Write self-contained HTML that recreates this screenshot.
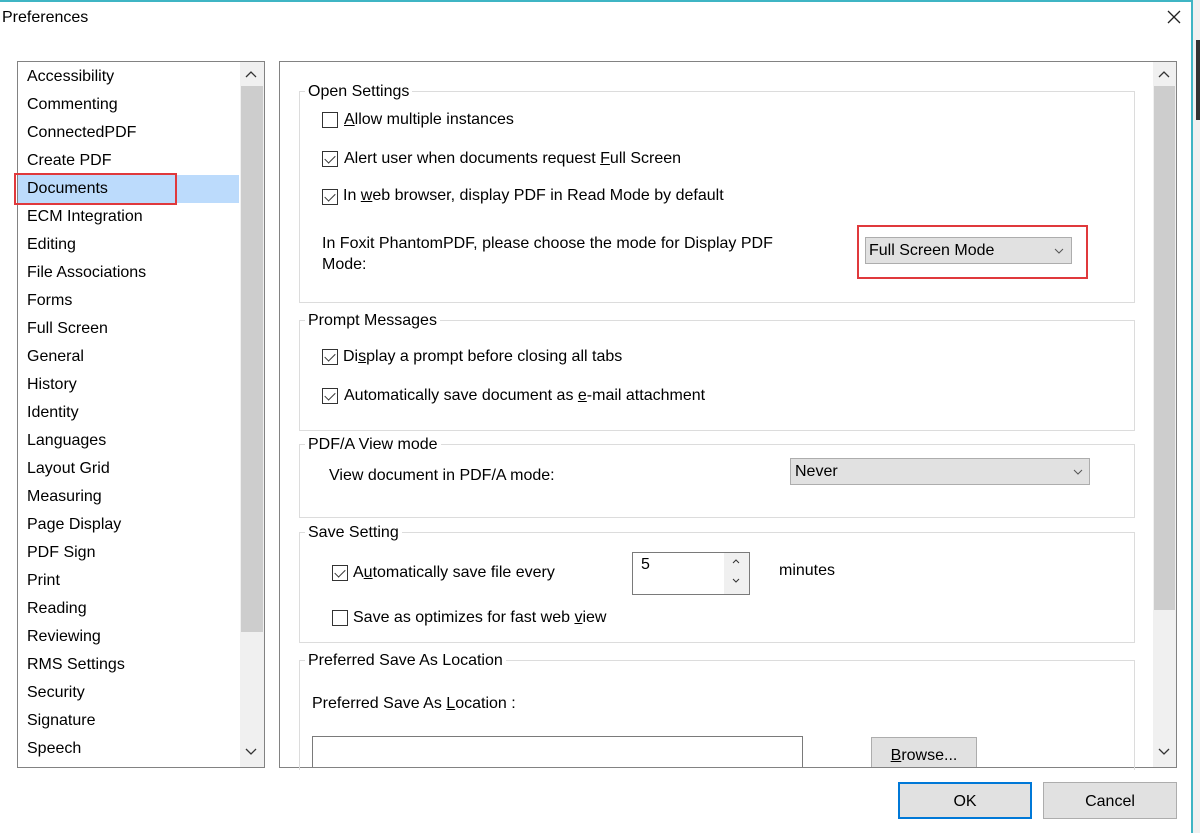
<!DOCTYPE html>
<html><head><style>
*{margin:0;padding:0;box-sizing:border-box}
body{width:1200px;height:833px;background:#fff;font-family:"Liberation Sans",sans-serif;font-size:16px;color:#000;position:relative;overflow:hidden}
.a{position:absolute;white-space:nowrap}
.grp{position:absolute;border:1px solid #dcdcdc}
.lg{position:absolute;background:#fff;padding:0 3px;font-size:16px}
.cb{position:absolute;width:16px;height:16px;border:1px solid #333;background:#fff}
.cb.c::after{content:"";position:absolute;left:4px;top:1px;width:5px;height:9px;border:solid #333;border-width:0 1.5px 1.5px 0;transform:rotate(45deg)}
.dd{position:absolute;background:#e1e1e1;border:1px solid #adadad}
.btn{position:absolute;background:#e1e1e1;border:1px solid #adadad;text-align:center}
svg{position:absolute}
</style></head><body>
<div class="a" style="left:0;top:0;width:1191px;height:2px;background:#3fb5c4"></div>
<div class="a" style="left:1191px;top:0;width:2px;height:833px;background:#3fb5c4"></div>
<div class="a" style="left:1193px;top:0;width:7px;height:833px;background:#f0f0f0"></div>
<div class="a" style="left:1196px;top:40px;width:4px;height:80px;background:#333"></div>
<div class="a" style="left:2px;top:9px;font-size:16px">Preferences</div>
<svg style="left:1167px;top:10px" width="14" height="14"><path d="M1 1L13 13M13 1L1 13" stroke="#222" stroke-width="1.3" fill="none"/></svg>

<div class="a" style="left:17px;top:61px;width:248px;height:707px;border:1px solid #828282"></div>
<div class="a" style="left:240px;top:62px;width:24px;height:705px;background:#f0f0f0"></div>
<div class="a" style="left:241px;top:86px;width:22px;height:546px;background:#cdcdcd"></div>
<svg style="left:245px;top:71px" width="12" height="8"><path d="M1 6L6 1L11 6" stroke="#333" stroke-width="1.3" fill="none"/></svg>
<svg style="left:245px;top:748px" width="12" height="8"><path d="M1 1L6 6L11 1" stroke="#333" stroke-width="1.3" fill="none"/></svg>
<div class="a" style="left:18px;top:175px;width:221px;height:28px;background:#bcdbfc"></div>
<div class="a" style="left:14px;top:173px;width:163px;height:32px;border:2px solid #e0393c"></div>
<div class="a" style="left:27px;top:63px;line-height:28px">Accessibility<br>Commenting<br>ConnectedPDF<br>Create PDF<br>Documents<br>ECM Integration<br>Editing<br>File Associations<br>Forms<br>Full Screen<br>General<br>History<br>Identity<br>Languages<br>Layout Grid<br>Measuring<br>Page Display<br>PDF Sign<br>Print<br>Reading<br>Reviewing<br>RMS Settings<br>Security<br>Signature<br>Speech</div>

<div class="a" style="left:279px;top:61px;width:898px;height:707px;border:1px solid #828282"></div>
<div class="a" style="left:1153px;top:62px;width:23px;height:705px;background:#f0f0f0"></div>
<div class="a" style="left:1154px;top:86px;width:21px;height:524px;background:#cdcdcd"></div>
<svg style="left:1158px;top:71px" width="12" height="8"><path d="M1 6L6 1L11 6" stroke="#333" stroke-width="1.3" fill="none"/></svg>
<svg style="left:1158px;top:748px" width="12" height="8"><path d="M1 1L6 6L11 1" stroke="#333" stroke-width="1.3" fill="none"/></svg>

<div class="grp" style="left:299px;top:91px;width:836px;height:212px"></div>
<div class="lg" style="left:305px;top:83px">Open Settings</div>
<div class="cb" style="left:322px;top:112px"></div><div class="a" style="left:344px;top:111px"><u>A</u>llow multiple instances</div>
<div class="cb c" style="left:322px;top:151px"></div><div class="a" style="left:344px;top:150px">Alert user when documents request <u>F</u>ull Screen</div>
<div class="cb c" style="left:322px;top:189px"></div><div class="a" style="left:343px;top:187px">In <u>w</u>eb browser, display PDF in Read Mode by default</div>
<div class="a" style="left:322px;top:233px;line-height:21px">In Foxit PhantomPDF, please choose the mode for Display PDF<br>Mode:</div>
<div class="dd" style="left:865px;top:237px;width:207px;height:27px"><span class="a" style="left:3px;top:4px">Full Screen Mode</span><svg style="left:188px;top:10px" width="10" height="6"><path d="M1 1L5 5L9 1" stroke="#555" stroke-width="1" fill="none"/></svg></div>
<div class="a" style="left:857px;top:225px;width:231px;height:54px;border:2px solid #e0393c"></div>

<div class="grp" style="left:299px;top:320px;width:836px;height:111px"></div>
<div class="lg" style="left:305px;top:312px">Prompt Messages</div>
<div class="cb c" style="left:322px;top:349px"></div><div class="a" style="left:343px;top:348px">Di<u>s</u>play a prompt before closing all tabs</div>
<div class="cb c" style="left:322px;top:388px"></div><div class="a" style="left:344px;top:387px">Automatically save document as <u>e</u>-mail attachment</div>

<div class="grp" style="left:299px;top:444px;width:836px;height:74px"></div>
<div class="lg" style="left:305px;top:436px">PDF/A View mode</div>
<div class="a" style="left:329px;top:467px">View document in PDF/A mode:</div>
<div class="dd" style="left:790px;top:458px;width:300px;height:27px"><span class="a" style="left:4px;top:4px">Never</span><svg style="left:282px;top:10px" width="10" height="6"><path d="M1 1L5 5L9 1" stroke="#555" stroke-width="1" fill="none"/></svg></div>

<div class="grp" style="left:299px;top:532px;width:836px;height:111px"></div>
<div class="lg" style="left:305px;top:524px">Save Setting</div>
<div class="cb c" style="left:332px;top:565px"></div><div class="a" style="left:353px;top:564px">A<u>u</u>tomatically save file every</div>
<div class="a" style="left:632px;top:552px;width:118px;height:43px;border:1px solid #7a7a7a;background:#fff"><span class="a" style="left:8px;top:3px">5</span><div class="a" style="left:91px;top:0;width:25px;height:41px;background:#f0f0f0"></div><svg style="left:99px;top:6px" width="8" height="5"><path d="M1 4L4 1L7 4" stroke="#333" fill="none"/></svg><svg style="left:99px;top:25px" width="8" height="5"><path d="M1 1L4 4L7 1" stroke="#333" fill="none"/></svg></div>
<div class="a" style="left:779px;top:562px">minutes</div>
<div class="cb" style="left:332px;top:610px"></div><div class="a" style="left:353px;top:609px">Save as optimizes for fast web <u>v</u>iew</div>

<div class="grp" style="left:299px;top:660px;width:836px;height:110px;border-bottom:none"></div>
<div class="lg" style="left:305px;top:652px">Preferred Save As Location</div>
<div class="a" style="left:312px;top:695px">Preferred Save As <u>L</u>ocation :</div>
<div class="a" style="left:312px;top:736px;width:491px;height:31px;border:1px solid #7a7a7a;border-bottom:none"></div>
<div class="btn" style="left:871px;top:737px;width:106px;height:30px;border-bottom:none;padding-top:9px"><u>B</u>rowse...</div>

<div class="btn" style="left:898px;top:782px;width:134px;height:37px;border:2px solid #0078d7;padding-top:9px">OK</div>
<div class="btn" style="left:1043px;top:782px;width:134px;height:37px;padding-top:10px">Cancel</div>
</body></html>
